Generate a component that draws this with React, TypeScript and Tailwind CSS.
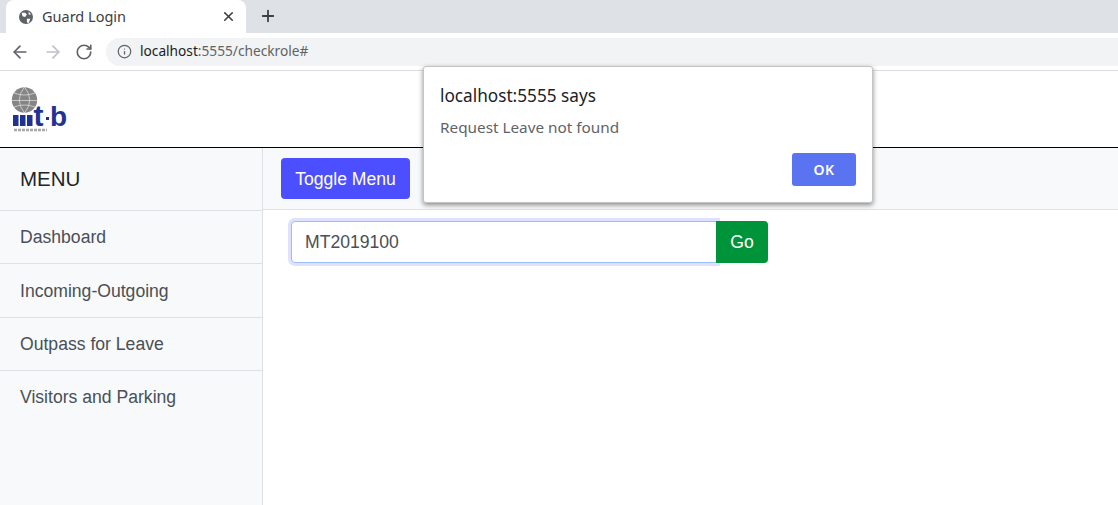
import { ArrowLeft, ArrowRight, Info, Plus, RotateCw, X } from 'lucide-react';

const menuItems = [
  { label: 'Dashboard', height: 'h-[53px]' },
  { label: 'Incoming-Outgoing', height: 'h-[54px] pt-[1px]' },
  { label: 'Outpass for Leave', height: 'h-[53px]' },
  { label: 'Visitors and Parking', height: 'h-[53px]' },
];

function Logo() {
  return (
    <svg width="60" height="48" viewBox="0 0 60 48" className="ml-[11px]">
      <circle cx="13.5" cy="14" r="12.7" fill="#858585" />
      <g stroke="#e4e4e4" strokeWidth="0.7" fill="none">
        <path d="M3 7 Q13.5 11 24 7" />
        <path d="M0.8 14.5 H26.2" />
        <path d="M3 21 Q13.5 17 24 21" />
        <path d="M13.5 1 Q3 14 13.5 27" />
        <path d="M13.5 1 Q24 14 13.5 27" />
      </g>
      <rect x="2" y="29" width="5.5" height="11" fill="#1f3393" />
      <rect x="9" y="29" width="5.5" height="11" fill="#1f3393" />
      <rect x="16" y="29" width="5.5" height="11" fill="#1f3393" />
      <text x="22.5" y="40" fontFamily="'Liberation Sans', sans-serif" fontWeight="700" fontSize="30" fill="#1f3393">t</text>
      <rect x="35" y="31" width="3" height="3" fill="#1f3393" />
      <text x="39" y="40" fontFamily="'Liberation Sans', sans-serif" fontWeight="700" fontSize="28" fill="#1f3393">b</text>
      <path d="M3 44 H36" stroke="#a8a8a8" strokeWidth="2.5" strokeDasharray="3 1" />
    </svg>
  );
}

function BrowserChrome() {
  return (
    <div className="font-['Noto_Sans',sans-serif]">
      <div className="flex h-[33px] items-end bg-[#dee1e6] pl-[6px]">
        <div className="flex h-[33px] w-[240px] items-center rounded-t-lg bg-white pl-[13px] pr-[10px]">
          <svg width="14" height="14" viewBox="0 0 16 16">
            <circle cx="8" cy="8" r="8" fill="#5f6368" />
            <path d="M3 3 L7 3 L9 5 L7 8 L4 7 Z M9 10 L13 10 L11 15 L9 14 Z M11 2 L14 5 L11 5 Z" fill="#fff" />
          </svg>
          <span className="ml-[9px] flex-1 text-[14.5px] text-[#3c4043]">Guard Login</span>
          <X size={15} strokeWidth={2.6} className="text-[#3c4043]" />
        </div>
        <Plus size={18} strokeWidth={2.4} className="mb-[8px] ml-[13px] text-[#3c4043]" />
      </div>
      <div className="flex h-[38px] items-center border-b border-[#dadce0] bg-white pl-[10px]">
        <ArrowLeft size={20} strokeWidth={2} className="text-[#5f6368]" />
        <ArrowRight size={20} strokeWidth={2} className="ml-[13px] text-[#bdc1c6]" />
        <RotateCw size={18} strokeWidth={2.2} className="ml-[12px] text-[#5f6368]" />
        <div className="ml-[13px] flex h-[28px] flex-1 items-center rounded-l-full bg-[#f1f3f4] pl-[11px]">
          <Info size={15} strokeWidth={2} className="text-[#5f6368]" />
          <span className="ml-[8px] text-[13.7px] text-[#202124]">
            localhost<span className="text-[#5f6368]">:5555/checkrole#</span>
          </span>
        </div>
      </div>
    </div>
  );
}

function AlertDialog() {
  return (
    <div className="absolute left-[423px] top-[66px] z-10 h-[137px] w-[450px] rounded-[3px] border border-[#c4c4c4] bg-white pl-[16px] pr-[16px] pt-[18px] shadow-[0_2px_5px_rgba(0,0,0,0.45)] font-['Noto_Sans',sans-serif]">
      <div className="text-[17.2px] leading-[22px] text-[#202124]">localhost:5555 says</div>
      <div className="mt-[10px] text-[15.3px] leading-[20px] text-[#5f6368]">Request Leave not found</div>
      <div className="mt-[16px] flex justify-end">
        <button className="ml-[1px] h-[33px] w-[64px] rounded-[3px] bg-[#5a73f0] text-[14px] font-semibold tracking-wide text-white">
          OK
        </button>
      </div>
    </div>
  );
}

export default function App() {
  return (
    <div className="relative flex h-[505px] w-[1118px] flex-col overflow-hidden bg-white font-['Liberation_Sans',sans-serif]">
      <BrowserChrome />
      <header className="flex h-[77px] items-center border-b border-black bg-white pt-[2px]">
        <Logo />
      </header>
      <div className="flex flex-1">
        <aside className="w-[263px] border-r border-[#dee2e6] bg-[#f8f9fa]">
          <div className="flex h-[63px] items-center border-b border-[#dee2e6] pl-[20px] text-[20.5px] text-[#212529]">
            MENU
          </div>
          <ul>
            {menuItems.map((item, i) => (
              <li
                key={item.label}
                className={`flex items-center pl-[20px] text-[17.6px] text-[#495057] ${item.height} ${
                  i < 3 ? 'border-b border-[#dee2e6]' : ''
                }`}
              >
                {item.label}
              </li>
            ))}
          </ul>
        </aside>
        <main className="flex-1">
          <div className="flex h-[62px] items-center border-b border-[#dee2e6] bg-[#f8f9fa] pl-[18px]">
            <button className="h-[41px] w-[129px] rounded-[4px] bg-[#4b4fff] pt-[1px] text-[17.6px] text-white">
              Toggle Menu
            </button>
          </div>
          <div className="ml-[28px] mt-[11px] flex h-[42px] w-[477px]">
            <input
              readOnly
              value="MT2019100"
              className="h-[42px] w-[426px] rounded-l-[4px] border border-[#9fbcf8] bg-white pl-[13px] text-[17.6px] text-[#495057] shadow-[0_0_0_3px_rgba(90,110,255,0.2)] outline-none"
            />
            <button className="relative -ml-[1px] h-[42px] w-[52px] rounded-r-[4px] bg-[#00943a] text-[17.6px] text-white">
              Go
            </button>
          </div>
        </main>
      </div>
      <AlertDialog />
    </div>
  );
}
